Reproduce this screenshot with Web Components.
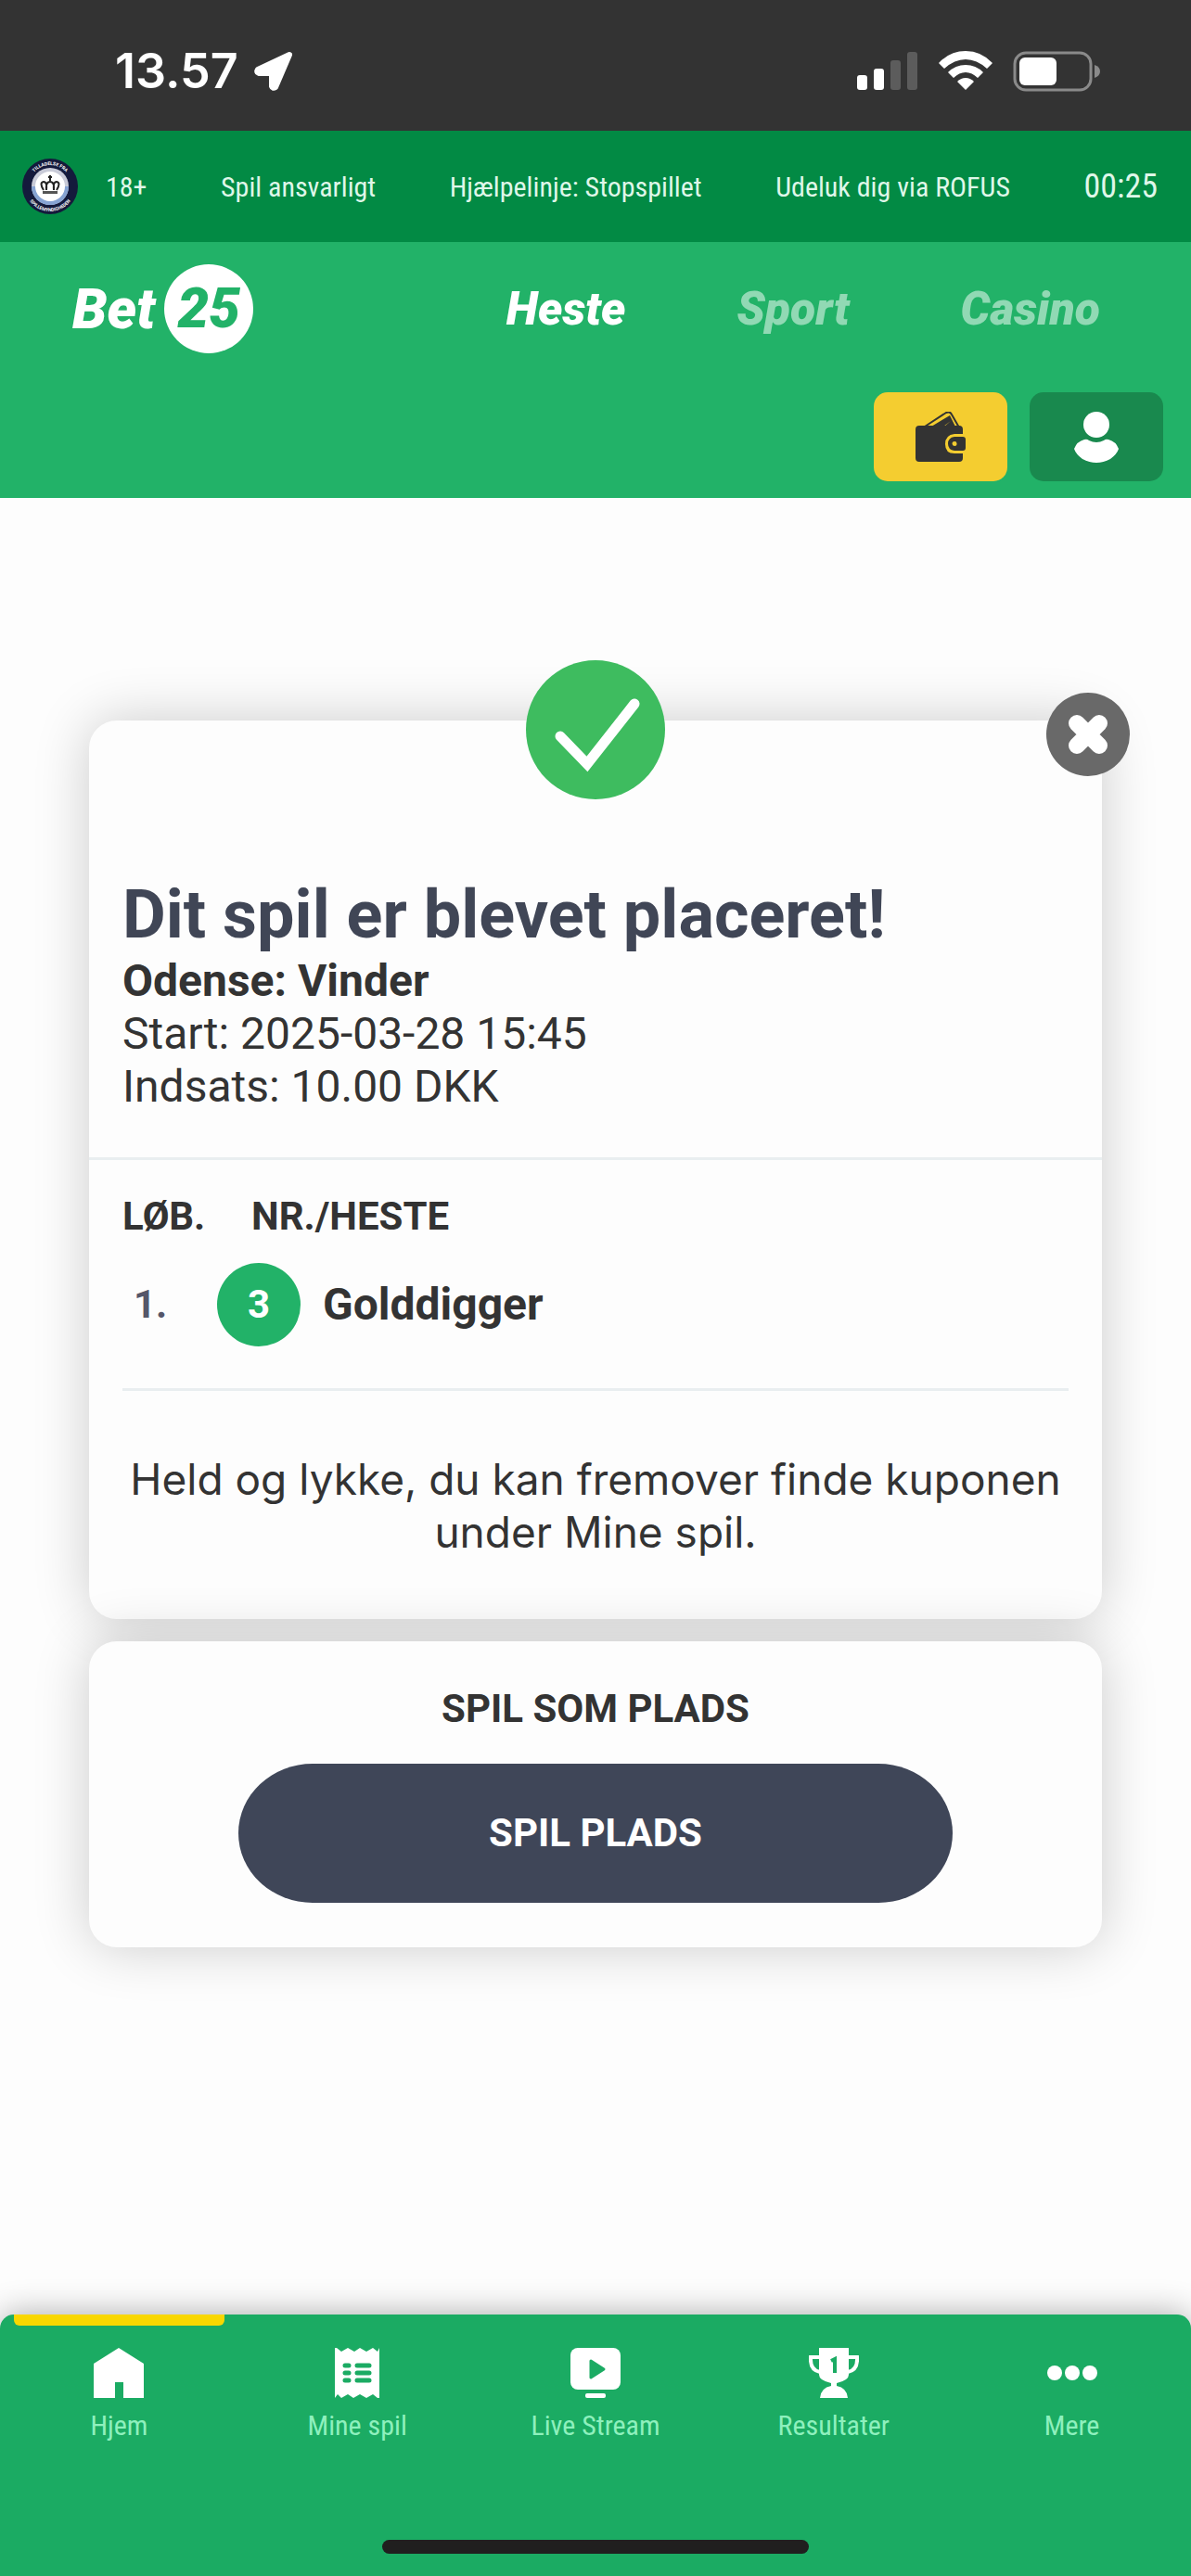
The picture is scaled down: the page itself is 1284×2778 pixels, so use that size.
<!DOCTYPE html>
<html lang="da">
<head>
<meta charset="utf-8">
<meta name="viewport" content="width=device-width, initial-scale=1">
<title>Bet25</title>
<style>
body {
  margin: 0;
  background: #fdfdfd;
  color: #333;
  font-family: Roboto, sans-serif;
}
</style>
</head>
<body>
<bet-app></bet-app>

<script>
const narrow = `"Roboto Condensed", "Liberation Sans Narrow", Roboto, sans-serif`;

class BetElement extends HTMLElement {
  constructor() {
    super();
    this.attachShadow({ mode: "open" }).innerHTML = this.template();
  }
}

class StatusBar extends BetElement {
  template() {
    return `
<style>
:host {
  display: flex;
  align-items: center;
  justify-content: space-between;
  box-sizing: border-box;
  height: 141px;
  padding: 12px 98px 0 124px;
  background: #333;
  color: #fff;
  font: 600 52px Inter, sans-serif;
}

div {
  display: flex;
  align-items: center;
}

.time { gap: 16px; }
.icons { gap: 22px; }
svg { display: block; }
</style>
<div class="time">
  <span>13.57</span>
  <svg width="44" height="44" viewBox="0 0 44 44" fill="#fff" stroke="#fff" stroke-width="6" stroke-linejoin="round"><path d="M39 4 5 20q-2 3 1 4h14v14q1 3 4 1Z"/></svg>
</div>
<div class="icons">
  <svg width="66" height="44" viewBox="0 0 66 44" fill="#fff">
    <rect y="26" width="11" height="16" rx="3"/>
    <rect x="18" y="19" width="11" height="23" rx="3"/>
    <g fill="#5c5c5c"><rect x="36" y="10" width="11" height="32" rx="3"/><rect x="54" y="1" width="11" height="41" rx="3"/></g>
  </svg>
  <svg width="58" height="44" viewBox="0 0 58 44" fill="#fff">
    <path d="M0 13Q12 0 29 0t29 13l-6 6Q41 9 29 9T6 19Z"/>
    <path d="M10 23q8-8 19-8t19 8l-6 6q-6-6-13-6t-13 6Z"/>
    <path d="M20 33q4-4 9-4t9 4l-9 9Z"/>
  </svg>
  <svg width="94" height="44" viewBox="0 0 94 44">
    <rect x="2" y="2" width="82" height="40" rx="12" fill="none" stroke="#8a8a8a" stroke-width="3"/>
    <rect x="7" y="7" width="40" height="30" rx="6" fill="#fff"/>
    <path d="M88 15q6 2 6 7t-6 7Z" fill="#8a8a8a"/>
  </svg>
</div>`;
  }
}

class LegalBar extends BetElement {
  template() {
    return `
<style>
:host {
  display: flex;
  align-items: center;
  justify-content: space-between;
  box-sizing: border-box;
  height: 120px;
  padding: 0 36px 0 24px;
  background: #028a44;
  color: #dff7e9;
  font: 30px ${narrow};
  white-space: nowrap;
}

.mark {
  display: flex;
  align-items: center;
  gap: 30px;
}

svg { display: block; }
a { color: inherit; text-decoration: none; }
time { font-size: 36px; }
</style>
<div class="mark">
  <svg width="60" height="60" viewBox="0 0 60 60">
    <circle cx="30" cy="30" r="30" fill="#141a3c"/>
    <circle cx="30" cy="30" r="20" fill="#c9cbd8"/>
    <path d="M10 30a20 20 0 0 0 40 0Z" fill="#86a3d3"/>
    <circle cx="30" cy="30" r="16" fill="#fff"/>
    <path id="top" d="M7 30a23 23 0 0 1 46 0" fill="none"/>
    <path id="low" d="M3 30a27 27 0 0 0 54 0" fill="none"/>
    <g fill="#fff" font-family="Roboto" font-size="5" font-weight="700" text-anchor="middle">
      <text><textPath href="#top" startOffset="50%">TILLADELSE FRA</textPath></text>
      <text><textPath href="#low" startOffset="50%">SPILLEMYNDIGHEDEN</textPath></text>
    </g>
    <path d="M30 18v6m-2-4h4M23 34q-5-8 0-9 4 0 3 9-1-9 4-9 5 0 4 9-1-9 3-9 5 1 0 9" fill="none" stroke="#222" stroke-width="2"/>
    <path d="M22 35h16v3H22Z" fill="#555"/>
  </svg>
  <span>18+</span>
</div>
<a href="#ansvarligt">Spil ansvarligt</a>
<a href="#stopspillet">Hjælpelinje: Stopspillet</a>
<a href="#rofus">Udeluk dig via ROFUS</a>
<time>00:25</time>`;
  }
}

class SiteHeader extends BetElement {
  template() {
    return `
<style>
:host {
  display: block;
  box-sizing: border-box;
  height: 276px;
  padding: 24px 30px 18px;
  background: #22b268;
}

.row {
  display: flex;
  align-items: center;
  justify-content: space-between;
  padding: 0 68px 0 48px;
}

a {
  color: #91d9b4;
  text-decoration: none;
  font: italic 900 50px Roboto, sans-serif;
}

.logo {
  display: flex;
  align-items: center;
  gap: 10px;
  color: #fff;
  font-size: 60px;
}

.logo span {
  width: 96px;
  line-height: 96px;
  border-radius: 50%;
  background: #fff;
  color: #22b268;
  text-align: center;
}

nav {
  display: flex;
  gap: 120px;
}

[aria-current] { color: #fff; }

.actions {
  display: flex;
  justify-content: flex-end;
  gap: 24px;
  margin-top: 42px;
}

button {
  display: grid;
  place-items: center;
  width: 144px;
  height: 96px;
  padding: 0;
  border: 0;
  border-radius: 15px;
  background: #19894e;
}

.wallet { background: #f4cd30; }
</style>
<div class="row">
  <a class="logo" href="#forside">Bet<span>25</span></a>
  <nav>
    <a href="#heste" aria-current="page">Heste</a>
    <a href="#sport">Sport</a>
    <a href="#casino">Casino</a>
  </nav>
</div>
<div class="actions">
  <button class="wallet" aria-label="Indbetal">
    <svg width="54" height="54" viewBox="0 0 54 54" fill="#333">
      <path d="M10 16 33 1q4-2 6 2l8 14" fill="none" stroke="#333" stroke-width="2"/>
      <path d="M17 16 37 4l6 12H31l7-6-8 6Z"/>
      <path d="M4 15h43q4 0 4 4v5H42q-10 1-10 11t10 10h9v5q0 4-4 4H4q-4 0-4-4V19q0-4 4-4Z"/>
      <path fill-rule="evenodd" d="M42 27h9q3 0 3 3v9q0 3-3 3h-9q-7-1-7-7.500t7-7.500Zm0 5a2.500 2.500 0 1 0 .1 5 2.500 2.500 0 0 0-.1-5Z"/>
    </svg>
  </button>
  <button aria-label="Min konto">
    <svg width="48" height="55" viewBox="0 0 48 55" fill="#fff">
      <circle cx="24" cy="14" r="14"/>
      <path d="M11 30q3-1 5 1 8 4 16 0 2-2 5-1 8 2 11 10-2 6-9 11-15 8-30 0-7-5-9-11 3-8 11-10Z"/>
    </svg>
  </button>
</div>`;
  }
}

class BetCard extends BetElement {
  template() {
    return `
<style>
:host {
  display: block;
  position: relative;
  border-radius: 30px;
  background: #fdfdfd;
  box-shadow: 0 0 60px #0003;
}
</style>
<slot></slot>`;
  }
}

class BetReceipt extends BetElement {
  template() {
    return `
<style>
:host { display: block; }

.check {
  position: absolute;
  top: -65px;
  left: 50%;
  translate: -50%;
}

.close {
  position: absolute;
  top: -30px;
  right: -30px;
  width: 90px;
  height: 90px;
  padding: 0;
  border: 0;
  border-radius: 50%;
  background: #696969;
}

svg { display: block; }

.summary {
  padding: 168px 36px 48px;
  border-bottom: 3px solid #e9eef0;
  font-size: 48px;
  line-height: 57px;
}

h1, p { margin: 0; }

h1 {
  color: #404656;
  font-size: 72px;
  line-height: 84px;
}

.horses {
  margin: 0 36px;
  padding: 36px 0 45px;
  border-bottom: 3px solid #e9eef0;
}

table {
  border-spacing: 0;
  font-size: 42px;
  line-height: 50px;
}

th, td {
  padding: 0;
  text-align: left;
}

th:first-child { width: 102px; }
th + th { padding-left: 37px; }

tbody th {
  box-sizing: border-box;
  padding: 25px 0 0 12px;
  color: #555669;
}

td {
  display: flex;
  align-items: center;
  gap: 24px;
  padding-top: 25px;
  font-size: 48px;
  font-weight: 700;
}

.nr {
  width: 90px;
  border-radius: 50%;
  background: #22b268;
  color: #fff;
  font-size: 42px;
  line-height: 90px;
  text-align: center;
}

.luck {
  padding: 67px 36px 65px;
  font: 46px/57px Inter, sans-serif;
  text-align: center;
}
</style>
<svg class="check" width="150" height="150" viewBox="0 0 150 150">
  <circle cx="75" cy="75" r="75" fill="#3ebc5f"/>
  <path d="m37 82 29 30 51-65" fill="none" stroke="#fff" stroke-width="11" stroke-linecap="round"/>
</svg>
<button class="close" aria-label="Luk">
  <svg width="90" height="90" viewBox="0 0 90 90"><path d="m33 33 24 24m0-24L33 57" stroke="#fff" stroke-width="18" stroke-linecap="round"/></svg>
</button>
<section class="summary">
  <h1>Dit spil er blevet placeret!</h1>
  <p><b>Odense: Vinder</b></p>
  <p>Start: 2025-03-28 15:45</p>
  <p>Indsats: 10.00 DKK</p>
</section>
<section class="horses">
  <table>
    <thead><tr><th>LØB.</th><th>NR./HESTE</th></tr></thead>
    <tbody><tr><th>1.</th><td><span class="nr">3</span>Golddigger</td></tr></tbody>
  </table>
</section>
<p class="luck">Held og lykke, du kan fremover finde kuponen under Mine spil.</p>`;
  }
}

class PlacePrompt extends BetElement {
  template() {
    return `
<style>
:host {
  display: block;
  padding: 48px 161px;
  text-align: center;
}

h2, button {
  font: 700 42px/50px Roboto, sans-serif;
}

h2 { margin: 0 0 34px; }

button {
  display: block;
  width: 100%;
  height: 150px;
  padding: 0;
  border: 0;
  border-radius: 80px / 75px;
  background: #3f4658;
  color: #fff;
}
</style>
<h2>SPIL SOM PLADS</h2>
<button>SPIL PLADS</button>`;
  }
}

class TabItem extends BetElement {
  template() {
    return `
<style>
:host {
  flex: 1;
  min-width: 0;
}

a {
  display: grid;
  justify-items: center;
  gap: 12px;
  position: relative;
  padding-top: 36px;
  color: #8ef0bd;
  font: 30px/36px ${narrow};
  text-decoration: none;
}

:host([active]) a::before {
  content: "";
  position: absolute;
  inset: 0 15px auto;
  height: 12px;
  border-radius: 0 0 6px 6px;
  background: #f9d700;
}

::slotted(svg) { display: block; }
</style>
<a href="#"><slot name="icon"></slot><slot></slot></a>`;
  }

  connectedCallback() {
    this.shadowRoot.querySelector("a").href = this.getAttribute("href");
  }
}

class TabBar extends BetElement {
  template() {
    return `
<style>
:host {
  display: flex;
  flex-direction: column;
  justify-content: space-between;
  align-items: center;
  position: sticky;
  bottom: 0;
  height: 282px;
  border-radius: 15px 15px 0 0;
  background: #1bab63;
  box-shadow: 0 0 36px #0005;
}

nav {
  display: flex;
  width: 100%;
}

.home {
  width: 460px;
  height: 15px;
  margin-bottom: 24px;
  border-radius: 8px;
  background: #201f1f;
}
</style>
<nav>
  <tab-item href="#hjem" active>
    <svg slot="icon" width="54" height="54" viewBox="0 0 54 54" fill="#fff"><path d="m27 0 27 17v37H32V37h-9v17H0V17Z"/></svg>Hjem
  </tab-item>
  <tab-item href="#minespil">
    <svg slot="icon" width="54" height="54" viewBox="0 0 54 54">
      <path d="M3 0h2l5 4 7-4 7 4 6-4 7 4 7-4 5 4 2-4v54h-2l-5-4-7 4-7-4-7 4-6-4-7 4-4-4-3 4Z" fill="#fff"/>
      <path d="M14 19h4m9 0h13M14 27h4m9 0h13M14 35h4m9 0h13" stroke="#1bab63" stroke-width="5" stroke-linecap="round"/>
    </svg>Mine spil
  </tab-item>
  <tab-item href="#livestream">
    <svg slot="icon" width="54" height="54" viewBox="0 0 54 54" fill="#fff">
      <rect width="54" height="45" rx="8"/><rect x="16" y="49" width="22" height="5" rx="2"/>
      <path d="m22 14 14 9-14 9Z" fill="#1bab63" stroke="#1bab63" stroke-width="3" stroke-linejoin="round"/>
    </svg>Live Stream
  </tab-item>
  <tab-item href="#resultater">
    <svg slot="icon" width="54" height="54" viewBox="0 0 54 54" fill="#fff">
      <path d="M11 0h32v29q0 6-13 9v3q11 2 12 13H12q1-11 12-13v-3q-13-3-13-9Z"/>
      <path d="M11 10H2q-1 14 10 16M43 10h9q1 14-10 16" fill="none" stroke="#fff" stroke-width="4"/>
      <path d="m24 14 4-2v15" fill="none" stroke="#1bab63" stroke-width="4"/>
    </svg>Resultater
  </tab-item>
  <tab-item href="#mere">
    <svg slot="icon" width="54" height="54" viewBox="0 0 54 54" fill="#fff"><circle cx="8" cy="27" r="8"/><circle cx="27" cy="27" r="8"/><circle cx="46" cy="27" r="8"/></svg>Mere
  </tab-item>
</nav>
<div class="home"></div>`;
  }
}

class BetApp extends BetElement {
  template() {
    return `
<style>
:host {
  display: flex;
  flex-direction: column;
  min-height: 100vh;
}

main {
  display: flex;
  flex: 1;
  flex-direction: column;
  gap: 24px;
  padding: 240px 96px 96px;
}
</style>
<status-bar></status-bar>
<legal-bar></legal-bar>
<site-header></site-header>
<main>
  <bet-card><bet-receipt></bet-receipt></bet-card>
  <bet-card><place-prompt></place-prompt></bet-card>
</main>
<tab-bar></tab-bar>`;
  }
}

customElements.define("status-bar", StatusBar);
customElements.define("legal-bar", LegalBar);
customElements.define("site-header", SiteHeader);
customElements.define("bet-card", BetCard);
customElements.define("bet-receipt", BetReceipt);
customElements.define("place-prompt", PlacePrompt);
customElements.define("tab-item", TabItem);
customElements.define("tab-bar", TabBar);
customElements.define("bet-app", BetApp);
</script>
</body>
</html>
